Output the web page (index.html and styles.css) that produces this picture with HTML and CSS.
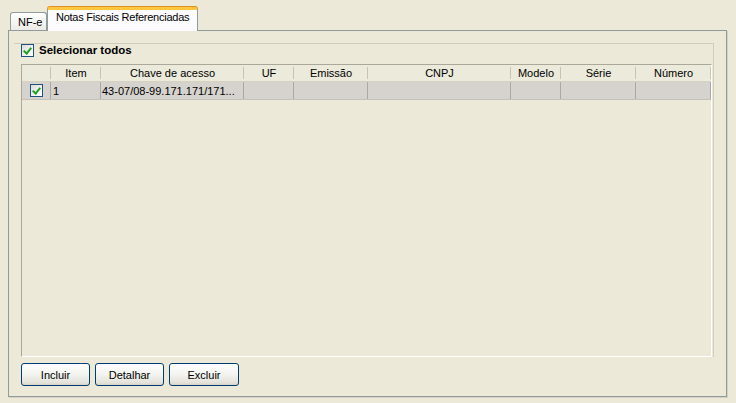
FILE: index.html
```html
<!DOCTYPE html>
<html lang="pt">
<head>
<meta charset="utf-8">
<title>Notas Fiscais Referenciadas</title>
<link rel="stylesheet" href="styles.css">
</head>
<body>
<div class="window">
  <div class="tabs">
    <div class="tab">NF-e</div>
    <div class="tab active">Notas Fiscais Referenciadas</div>
  </div>
  <div class="panel">
    <div class="group">
      <label class="selall"><span class="cb checked"></span><span>Selecionar todos</span></label>
      <div class="table">
        <div class="row head">
          <div class="c c1"></div>
          <div class="c c2">Item</div>
          <div class="c c3">Chave de acesso</div>
          <div class="c c4">UF</div>
          <div class="c c5">Emissão</div>
          <div class="c c6">CNPJ</div>
          <div class="c c7">Modelo</div>
          <div class="c c8">Série</div>
          <div class="c c9">Número</div>
        </div>
        <div class="row data">
          <div class="c c1"><span class="cb checked"></span></div>
          <div class="c c2">1</div>
          <div class="c c3">43-07/08-99.171.171/171...</div>
          <div class="c c4"></div>
          <div class="c c5"></div>
          <div class="c c6"></div>
          <div class="c c7"></div>
          <div class="c c8"></div>
          <div class="c c9"></div>
        </div>
      </div>
    </div>
    <div class="buttons">
      <button class="btn">Incluir</button>
      <button class="btn">Detalhar</button>
      <button class="btn">Excluir</button>
    </div>
  </div>
</div>
</body>
</html>
```

FILE: styles.css
```css
* { box-sizing: border-box; }
html, body { margin: 0; padding: 0; }
body {
  background: #ECE9D8;
  font-family: "Liberation Sans", Arial, sans-serif;
  font-size: 11px;
  color: #000;
  width: 736px;
  height: 403px;
  overflow: hidden;
}
.window {
  padding: 7px 0 0 8px;
}
.tabs {
  display: flex;
  align-items: flex-end;
  height: 23px;
  padding-left: 2px;
  position: relative;
  z-index: 2;
}
.tab {
  height: 18px;
  width: 37px;
  border: 1px solid #919B9C;
  border-bottom: none;
  border-radius: 3px 3px 0 0;
  background: linear-gradient(#FFFFFF, #F3F3EF 60%, #ECEBE6);
  padding: 3px 0 0 7px;
  line-height: 13px;
}
.tab.active {
  height: 24px;
  width: 151px;
  margin-bottom: -1px;
  background: #FCFCFE;
  border-top: 3px solid #FFC73C;
  box-shadow: 0 -1px 0 #E68B2C;
  padding: 1px 0 0 8px;
  letter-spacing: -0.25px;
}
.panel {
  width: 719px;
  height: 367px;
  border: 1px solid #919B9C;
  box-shadow: 1px 1px 0 #D6D2C2;
  padding: 12px 12px 0 5px;
  display: flex;
  flex-direction: column;
}
.group {
  height: 314px;
  border-top: 1px solid #D0CDBC;
  border-right: 1px solid #D0CDBC;
  display: flex;
  flex-direction: column;
  padding: 0 1px 0 7px;
}
.selall {
  display: flex;
  align-items: flex-start;
  height: 20px;
  font-weight: bold;
  font-size: 11.5px;
  gap: 5px;
  padding-top: 0;
}
.selall span:last-child {
  line-height: 13px;
  margin-top: 0;
}
.cb {
  display: inline-block;
  width: 13px;
  height: 13px;
  border: 1px solid #1C5180;
  background: linear-gradient(135deg, #DCDCD7, #FFFFFF);
  position: relative;
  flex: none;
}
.cb.checked::after {
  content: "";
  position: absolute;
  left: 3px;
  top: 1px;
  width: 3px;
  height: 6px;
  border: solid #21A121;
  border-width: 0 2px 2px 0;
  transform: rotate(40deg);
  transform-origin: center;
}
.table {
  flex: 1;
  border-top: 1px solid #ACA899;
  border-left: 1px solid #ACA899;
  border-bottom: 1px solid #FFFFFF;
  border-right: 1px solid #FFFFFF;
}
.row {
  display: flex;
}
.row.head {
  height: 17px;
  background: #EBEADB;
  border-bottom: 1px solid #D6D2C2;
}
.row.data {
  height: 18px;
  background: #D6D3CE;
  border-bottom: 1px solid #C4C1B8;
}
.c {
  flex: none;
  white-space: nowrap;
  overflow: hidden;
  line-height: 16px;
}
.head .c {
  text-align: center;
  position: relative;
  line-height: 17px;
}
.head .c::after {
  content: "";
  position: absolute;
  right: 0;
  top: 2px;
  bottom: 2px;
  width: 1px;
  background: #C7C5B2;
}
.data .c {
  border-right: 1px solid #A9A9A9;
  padding-left: 2px;
  line-height: 18px;
}
.data .c1 {
  display: flex;
  align-items: center;
  justify-content: flex-start;
  padding: 0 0 0 8px;
}
.data .c3 { padding-left: 1px; }
.c1 { width: 29px; }
.c2 { width: 50px; }
.c3 { width: 143px; }
.c4 { width: 50px; }
.c5 { width: 74px; }
.c6 { width: 143px; }
.c7 { width: 50px; }
.c8 { width: 75px; }
.c9 { width: 75px; }
.buttons {
  display: flex;
  gap: 5px;
  margin-top: 6px;
  padding-left: 7px;
}
.btn {
  width: 69px;
  height: 23px;
  border: 1px solid #003C74;
  border-radius: 3px;
  background: linear-gradient(#FFFFFF, #F3F3EF 50%, #E3E2DA 90%, #D6D0C5);
  font-family: "Liberation Sans", Arial, sans-serif;
  font-size: 11px;
  color: #000;
  padding: 0;
}
.btn:last-child { width: 70px; }
```
